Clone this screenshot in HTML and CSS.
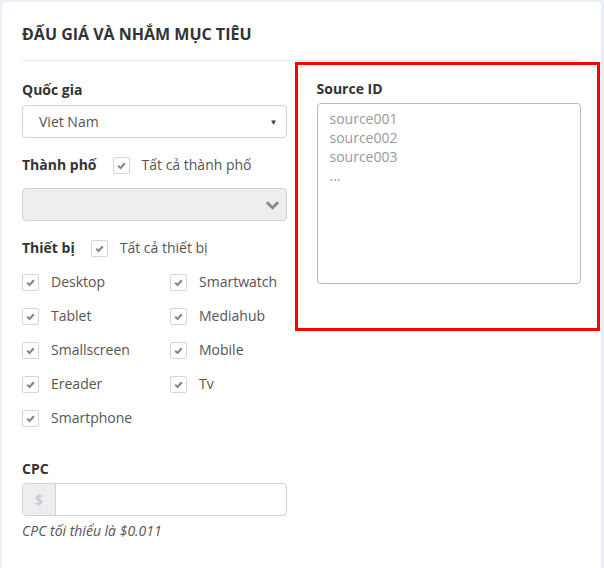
FILE: index.html
```html
<!DOCTYPE html>
<html lang="vi">
<head>
<meta charset="UTF-8">
<title>Đấu giá và nhắm mục tiêu</title>
<link rel="stylesheet" href="styles.css">
</head>
<body>

<div class="card">
  <h2 class="card-title">Đấu giá và nhắm mục tiêu</h2>

  <div class="row">
    <div class="col">
      <label class="field-label">Quốc gia</label>
      <div class="select">
        <span>Viet Nam</span>
        <span class="caret">&#9660;</span>
      </div>

      <div class="inline-head">
        <span class="field-label">Thành phố</span>
        <span class="check"><svg viewBox="0 0 10 10"><polyline points="2,5.2 4.2,7.3 8,2.9"/></svg></span>
        <span class="check-text">Tất cả thành phố</span>
      </div>
      <div class="select disabled">
        <svg class="chevron" viewBox="0 0 16 10"><polyline points="2,2 8,8 14,2"/></svg>
      </div>

      <div class="inline-head">
        <span class="field-label">Thiết bị</span>
        <span class="check"><svg viewBox="0 0 10 10"><polyline points="2,5.2 4.2,7.3 8,2.9"/></svg></span>
        <span class="check-text">Tất cả thiết bị</span>
      </div>
      <div class="device-grid">
        <div class="device"><span class="check"><svg viewBox="0 0 10 10"><polyline points="2,5.2 4.2,7.3 8,2.9"/></svg></span>Desktop</div>
        <div class="device"><span class="check"><svg viewBox="0 0 10 10"><polyline points="2,5.2 4.2,7.3 8,2.9"/></svg></span>Smartwatch</div>
        <div class="device"><span class="check"><svg viewBox="0 0 10 10"><polyline points="2,5.2 4.2,7.3 8,2.9"/></svg></span>Tablet</div>
        <div class="device"><span class="check"><svg viewBox="0 0 10 10"><polyline points="2,5.2 4.2,7.3 8,2.9"/></svg></span>Mediahub</div>
        <div class="device"><span class="check"><svg viewBox="0 0 10 10"><polyline points="2,5.2 4.2,7.3 8,2.9"/></svg></span>Smallscreen</div>
        <div class="device"><span class="check"><svg viewBox="0 0 10 10"><polyline points="2,5.2 4.2,7.3 8,2.9"/></svg></span>Mobile</div>
        <div class="device"><span class="check"><svg viewBox="0 0 10 10"><polyline points="2,5.2 4.2,7.3 8,2.9"/></svg></span>Ereader</div>
        <div class="device"><span class="check"><svg viewBox="0 0 10 10"><polyline points="2,5.2 4.2,7.3 8,2.9"/></svg></span>Tv</div>
        <div class="device"><span class="check"><svg viewBox="0 0 10 10"><polyline points="2,5.2 4.2,7.3 8,2.9"/></svg></span>Smartphone</div>
      </div>

      <label class="field-label cpc-label">CPC</label>
      <div class="input-group">
        <span class="addon">$</span>
        <span class="input"></span>
      </div>
      <p class="help">CPC tối thiểu là $0.011</p>
    </div>

    <div class="col col-right">
      <div class="highlight"></div>
      <label class="field-label">Source ID</label>
      <div class="textarea">
        <div>source001</div>
        <div>source002</div>
        <div>source003</div>
        <div>...</div>
      </div>
    </div>
  </div>
</div>

</body>
</html>
```

FILE: styles.css
```css
body {
  margin: 0;
  padding: 2px 3px 0 2px;
  background-color: #eceff5;
  font-family: 'Open Sans', 'Noto Sans', sans-serif;
  font-size: 14px;
  color: #444;
}

.card {
  background: #fff;
  border-radius: 4px;
  padding: 0 20px;
  min-height: 600px;
}

.card-title {
  margin: 0;
  padding: 21px 0 15px;
  font-size: 16px;
  line-height: 22px;
  font-weight: 700;
  text-transform: uppercase;
  color: #333;
  border-bottom: 1px solid #e8ebf0;
}

.row {
  display: flex;
  margin: 0 -15px;
}

.col {
  flex: 1;
  padding: 19px 15px 0;
}

.col-right {
  position: relative;
  padding-top: 18px;
}

.highlight {
  position: absolute;
  top: 1px;
  left: -7px;
  right: -4px;
  height: 263px;
  border: 3px solid #ff0000;
}

.field-label {
  display: block;
  font-weight: 700;
  color: #333;
  line-height: 20px;
  margin-bottom: 5px;
}

.col-right .field-label {
  margin-bottom: 4px;
}

.select {
  height: 33px;
  box-sizing: border-box;
  border: 1px solid #cdd2dc;
  border-radius: 4px;
  display: flex;
  align-items: center;
  justify-content: space-between;
  padding: 0 8px 0 16px;
  color: #555;
}

.caret {
  font-size: 8px;
  color: #444;
}

.select.disabled {
  background: #eeeeee;
  justify-content: flex-end;
  padding-right: 6px;
}

.chevron {
  width: 15px;
  height: 10px;
  fill: none;
  stroke: #8a8a8a;
  stroke-width: 3;
}

.inline-head {
  display: flex;
  align-items: center;
  margin: 17px 0 13px;
  line-height: 20px;
}

.inline-head .field-label {
  margin: 0 16px 0 0;
}

.check {
  width: 17px;
  height: 17px;
  box-sizing: border-box;
  border: 1px solid #d6d6d6;
  border-radius: 2px;
  display: inline-flex;
  align-items: center;
  justify-content: center;
  margin-right: 12px;
  flex-shrink: 0;
}

.check svg {
  width: 11px;
  height: 11px;
  fill: none;
  stroke: #888;
  stroke-width: 2;
}

.check-text {
  color: #555;
}

.device-grid {
  display: grid;
  grid-template-columns: 148px 1fr;
  row-gap: 14px;
  margin-top: 14px;
}

.device {
  display: flex;
  align-items: center;
  line-height: 20px;
  color: #555;
}

.cpc-label {
  margin-top: 31px;
  margin-bottom: 4px;
}

.input-group {
  display: flex;
  height: 33px;
  box-sizing: border-box;
  border: 1px solid #cdd2dc;
  border-radius: 4px;
  overflow: hidden;
}

.addon {
  width: 32px;
  background: #eeeeee;
  border-right: 1px solid #cdd2dc;
  display: flex;
  align-items: center;
  justify-content: center;
  color: #c4cbd9;
  font-weight: 700;
}

.input {
  flex: 1;
}

.help {
  margin: 5px 0 0;
  font-style: italic;
  color: #555;
  line-height: 20px;
}

.textarea {
  height: 181px;
  box-sizing: border-box;
  border: 1px solid #b3bacb;
  border-radius: 4px;
  padding: 5px 12px;
  color: #999;
  line-height: 19px;
}
```
